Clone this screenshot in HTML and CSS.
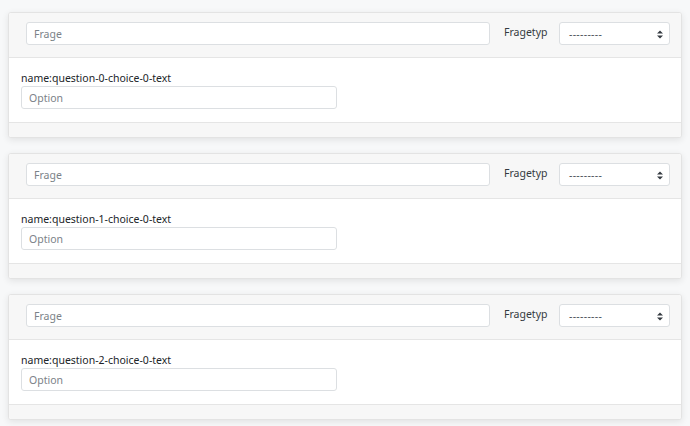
FILE: index.html
```html
<!DOCTYPE html>
<html>
<head>
<meta charset="utf-8">
<link rel="stylesheet" href="styles.css">
</head>
<body>
<div class="list">
  <div class="card">
    <div class="card-header">
      <input class="ctl q" type="text" placeholder="Frage">
      <label class="typ">Fragetyp</label>
      <div class="sel"><span>---------</span><svg class="arr" width="6" height="9" viewBox="0 0 6 9"><path d="M0 3.6L3 0.4L6 3.6Z M0 5.4L3 8.6L6 5.4Z" fill="#343a40"/></svg></div>
    </div>
    <div class="card-body">
      <div class="lbl">name:question-0-choice-0-text</div>
      <input class="ctl opt" type="text" placeholder="Option">
    </div>
    <div class="card-footer"></div>
  </div>
  <div class="card">
    <div class="card-header">
      <input class="ctl q" type="text" placeholder="Frage">
      <label class="typ">Fragetyp</label>
      <div class="sel"><span>---------</span><svg class="arr" width="6" height="9" viewBox="0 0 6 9"><path d="M0 3.6L3 0.4L6 3.6Z M0 5.4L3 8.6L6 5.4Z" fill="#343a40"/></svg></div>
    </div>
    <div class="card-body">
      <div class="lbl">name:question-1-choice-0-text</div>
      <input class="ctl opt" type="text" placeholder="Option">
    </div>
    <div class="card-footer"></div>
  </div>
  <div class="card">
    <div class="card-header">
      <input class="ctl q" type="text" placeholder="Frage">
      <label class="typ">Fragetyp</label>
      <div class="sel"><span>---------</span><svg class="arr" width="6" height="9" viewBox="0 0 6 9"><path d="M0 3.6L3 0.4L6 3.6Z M0 5.4L3 8.6L6 5.4Z" fill="#343a40"/></svg></div>
    </div>
    <div class="card-body">
      <div class="lbl">name:question-2-choice-0-text</div>
      <input class="ctl opt" type="text" placeholder="Option">
    </div>
    <div class="card-footer"></div>
  </div>
</div>
</body>
</html>
```
FILE: styles.css
```css
html, body {
  margin: 0;
  padding: 0;
  background: #f7f8f9;
}
body {
  padding: 12px 8px 8px 8px;
  font-family: "Noto Sans", "Open Sans", sans-serif;
  font-size: 10.5px;
  color: #212529;
}
.list {
  display: flex;
  flex-direction: column;
  gap: 15px;
}
.card {
  background: #fff;
  border: 1px solid #e3e3e3;
  border-radius: 3px;
  box-shadow: 0 2px 7px rgba(0, 0, 0, 0.09);
  overflow: hidden;
}
.card-header {
  background: #f7f7f7;
  border-bottom: 1px solid #e5e5e5;
  display: flex;
  align-items: flex-start;
  padding: 9px 11px 12px 17px;
}
.ctl {
  box-sizing: border-box;
  height: 23px;
  border: 1px solid #dcdfe2;
  border-radius: 3px;
  background: #fff;
  font-family: inherit;
  font-size: 10.5px;
  padding: 0 7px;
  outline: none;
  margin: 0;
}
.ctl::placeholder {
  color: #7b8288;
}
.q {
  flex: 1;
  min-width: 0;
}
.typ {
  margin-left: 13px;
  padding-left: 1px;
  width: 55px;
  line-height: 21px;
  color: #343a40;
}
.sel {
  position: relative;
  box-sizing: border-box;
  width: 111px;
  height: 23px;
  border: 1px solid #dcdfe2;
  border-radius: 3px;
  background: #fff;
  padding: 0 9px;
  line-height: 22px;
  color: #495057;
  letter-spacing: 0.3px;
}
.arr {
  position: absolute;
  right: 6px;
  top: 7px;
}
.card-body {
  padding: 13px 12px 13px 12px;
}
.lbl {
  line-height: 14px;
  margin-bottom: 1px;
}
.opt {
  width: 316px;
  display: block;
}
.card-footer {
  background: #f7f7f7;
  border-top: 1px solid #e5e5e5;
  height: 14px;
}
```
